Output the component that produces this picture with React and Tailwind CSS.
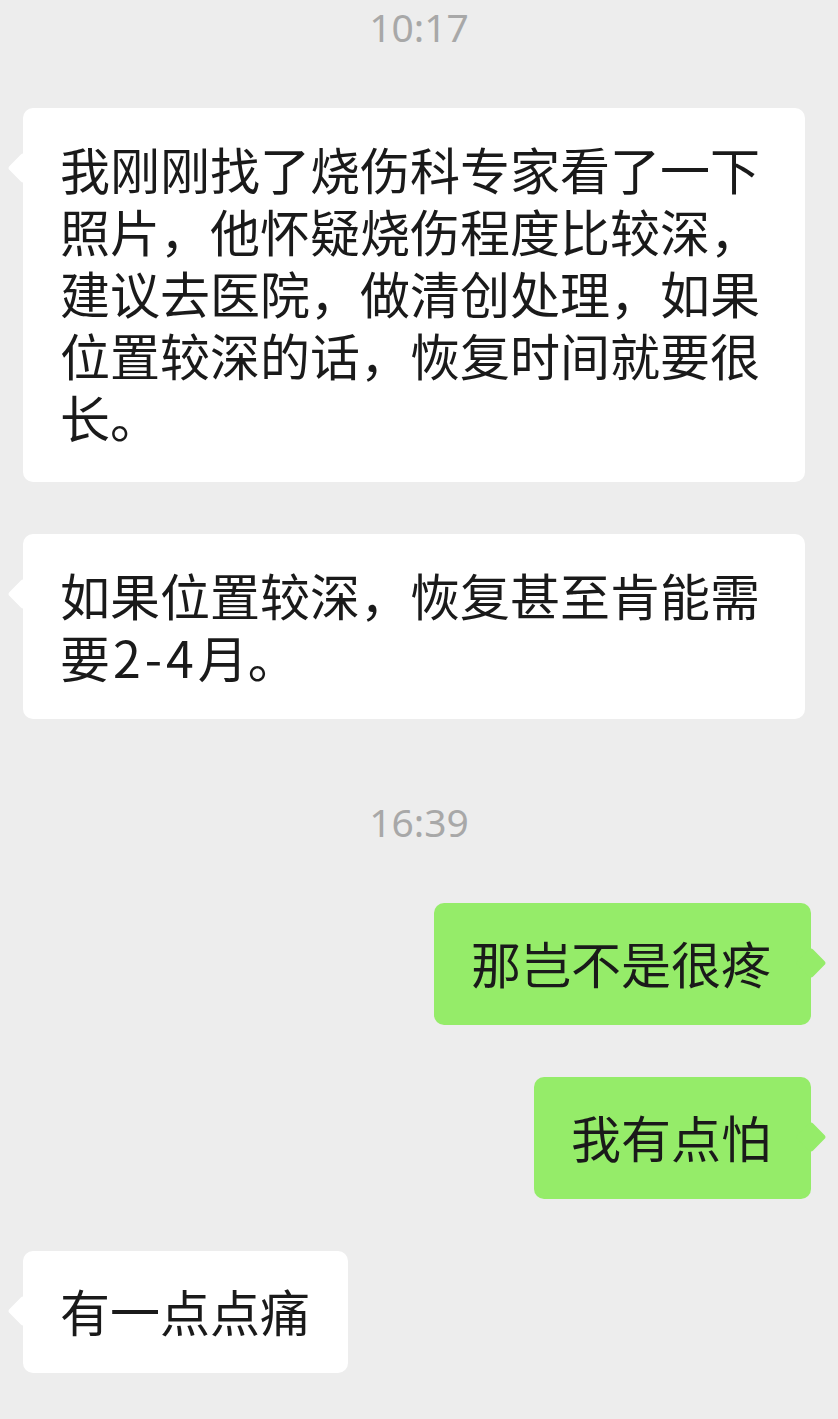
import React from "react";

const font = {
  fontFamily: '"Noto Sans CJK SC", "Noto Sans", sans-serif',
};

function TimeStamp({ children, className = "" }) {
  return (
    <div
      className={`flex justify-center text-[39px] leading-[54px] text-[#a8a8a8] ${className}`}
      style={{ fontFamily: '"Noto Sans", "Open Sans", sans-serif' }}
    >
      {children}
    </div>
  );
}

function Left({ children, className = "", pad = "pt-[28px] pb-[32px]" }) {
  return (
    <div className={`flex justify-start pl-[23px] pr-[33px] ${className}`}>
      <div className={`relative rounded-[10px] bg-white pl-[37px] pr-[38px] ${pad} text-[50px] leading-[62px] text-[#1a1a1a]`}>
        <div className="absolute left-[-11px] top-[49px] h-[22px] w-[22px] rotate-45 rounded-[3px] bg-white" />
        <div className="relative">{children}</div>
      </div>
    </div>
  );
}

function Right({ children, className = "" }) {
  return (
    <div className={`flex justify-end pr-[27px] ${className}`}>
      <div className="relative rounded-[10px] bg-[#95ec69] pl-[37px] pr-[40px] pt-[28px] pb-[32px] text-[50px] leading-[62px] text-[#1a1a1a]">
        <div className="absolute right-[-11px] top-[49px] h-[22px] w-[22px] rotate-45 rounded-[3px] bg-[#95ec69]" />
        <div className="relative">{children}</div>
      </div>
    </div>
  );
}

export default function App() {
  return (
    <div className="flex min-h-[1419px] w-[838px] flex-col bg-[#ededed]" style={font}>
      <TimeStamp>10:17</TimeStamp>
      <Left className="mt-[54px]" pad="pt-[29px] pb-[35px]">
        我刚刚找了烧伤科专家看了一下照片，他怀疑烧伤程度比较深，建议去医院，做清创处理，如果位置较深的话，恢复时间就要很长。
      </Left>
      <Left className="mt-[52px]" pad="pt-[29px] pb-[32px]">
        如果位置较深，恢复甚至肯能需要<span className="tracking-[4px] pl-[3px]">2-4</span>月。
      </Left>
      <TimeStamp className="mt-[76px]">16:39</TimeStamp>
      <Right className="mt-[54px]">那岂不是很疼</Right>
      <Right className="mt-[52px]">我有点怕</Right>
      <Left className="mt-[52px]">有一点点痛</Left>
    </div>
  );
}
